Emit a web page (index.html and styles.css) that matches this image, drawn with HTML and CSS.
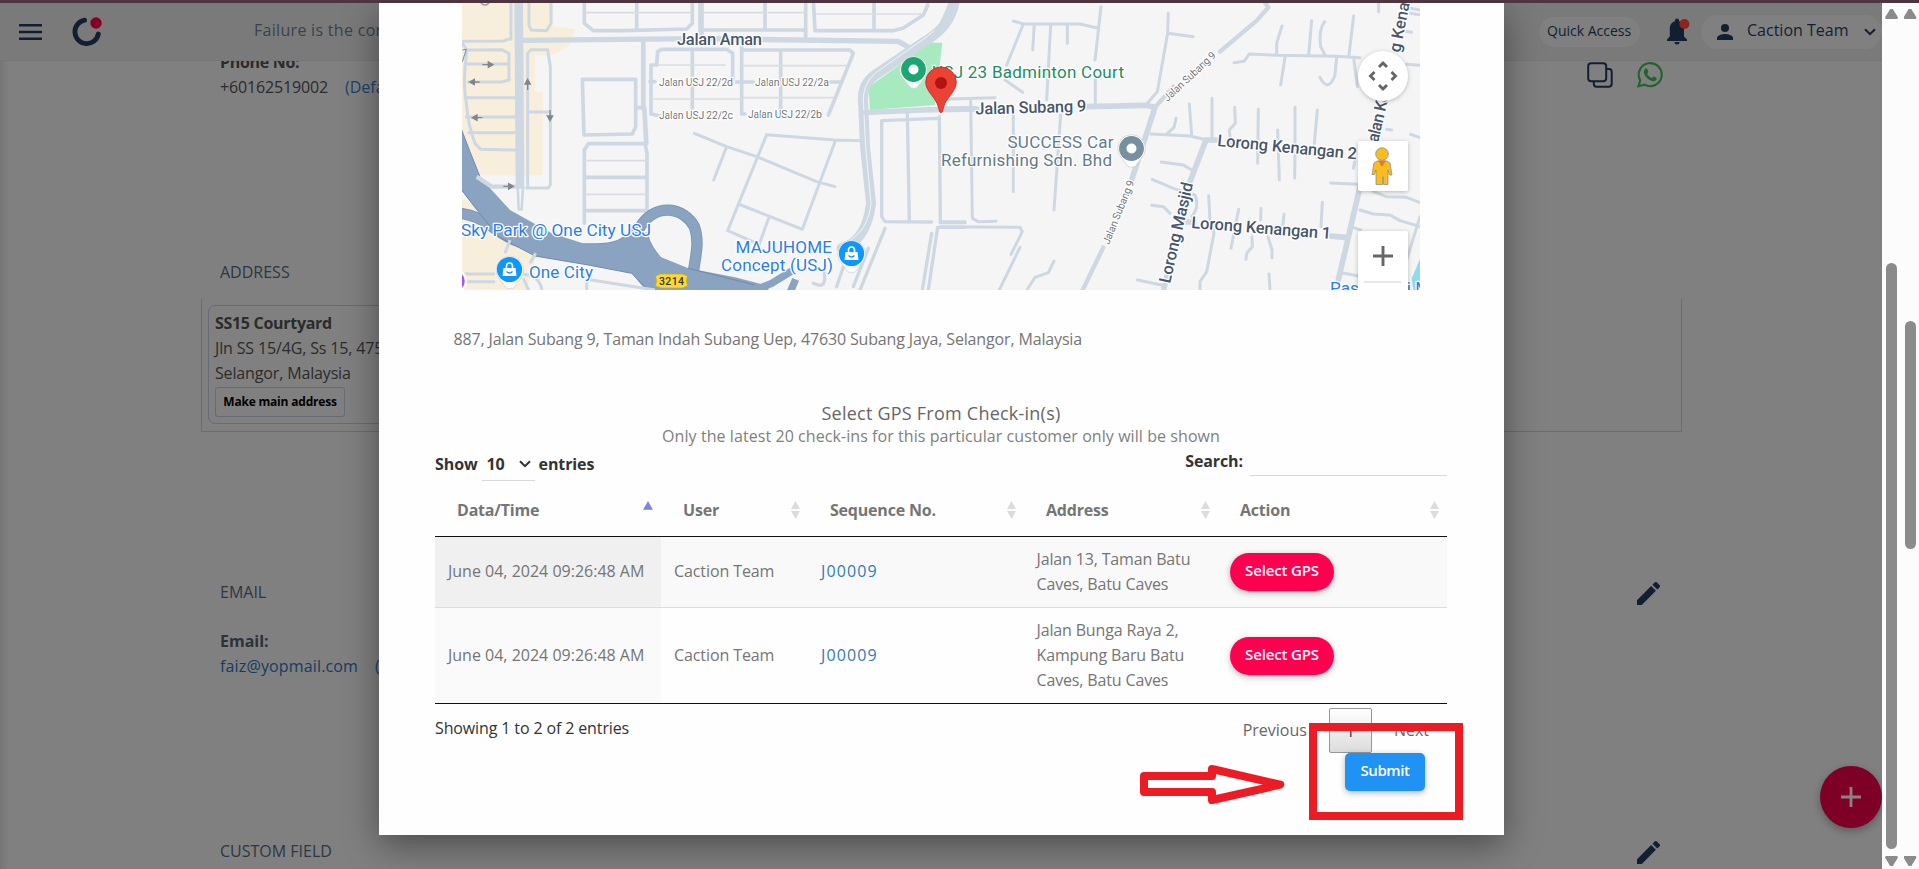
FILE: index.html
```html
<!DOCTYPE html>
<html lang="en">
<head>
<meta charset="utf-8">
<title>Customer address</title>
<link rel="stylesheet" href="styles.css">
</head>
<body>
<div class="strip"></div>
<div class="shell">
  <div class="app">
    <header class="top">
      <svg class="menu" width="23" height="16" viewBox="0 0 23 16"><path d="M0 1.3h23M0 8h23M0 14.7h23" stroke="#121f30" stroke-width="2.4"/></svg>
      <svg class="logo" width="30" height="30" viewBox="0 0 30 30"><path d="M12.6 3.2A11.8 11.8 0 1 0 26.3 17" fill="none" stroke="#121f30" stroke-width="4.8" stroke-linecap="round"/><circle cx="24" cy="6" r="5.7" fill="#870026"/></svg>
      <span class="quote">Failure is the condiment that gives success</span>
      <span class="spacer"></span>
      <span class="pill quick">Quick Access</span>
      <svg class="bell" width="24" height="28" viewBox="0 0 24 28"><path d="M1 23v-1.600l2.800-2.800v-8C3.800 6 6.300 3.800 9 3.200V2.600a2 2 0 0 1 4 0v.6c3 .7 5 3.300 5 7.400v8l3 2.800V23zM8.500 24h5a2.500 2.500 0 0 1-5 0z" fill="#121f30"/><circle cx="18.400" cy="6" r="5" fill="#8e2420"/></svg>
      <span class="pill user">
        <svg width="16" height="16" viewBox="0 0 16 16"><circle cx="8" cy="4" r="4" fill="#121f30"/><path d="M0 16v-2c0-2.700 5.300-4 8-4s8 1.300 8 4v2z" fill="#121f30"/></svg>
        <span class="name">Caction Team</span>
        <svg width="12" height="8" viewBox="0 0 12 8"><path d="M1 1.200l5 5 5-5" fill="none" stroke="#121f30" stroke-width="2"/></svg>
      </span>
    </header>
    <main class="page">
      <section class="row phone">
        <div><b class="dark">Phone No:</b><div><span class="num">+60162519002</span><span class="def">(Default)</span></div></div>
        <div class="tools">
          <svg width="26" height="26" viewBox="0 0 26 26" fill="none" stroke="#121f30" stroke-width="2"><rect x="1.200" y="1.200" width="18" height="18" rx="3"/><path d="M20 7h2a2.700 2.700 0 0 1 2.700 2.700v12a3 3 0 0 1-3 3H9.500a2.700 2.700 0 0 1-2.700-2.700v-2.300"/></svg>
          <svg width="26" height="26" viewBox="0 0 26 26"><path d="M1.500 24.300l1.700-6A11.500 11.500 0 1 1 7.600 22.700z" fill="none" stroke="#21622f" stroke-width="2.100"/><path d="M8.300 6.700c.7-.6 1.500-.4 1.900.3l1.100 2.500c.2.800-.9 1.700-1.200 2.200 1 2 2.500 3.400 4.700 4.300.6-.4 1.300-1.800 2.100-1.500l2.500 1.200c.6.500.3 1.700-.2 2.300-1 1.200-2.600 1.500-4.200 1C11.200 17.800 8.300 15 7.100 11.700c-.6-1.900-.1-3.900 1.200-5z" fill="#21622f"/></svg>
        </div>
      </section>
      <h3 class="head address-head">ADDRESS</h3>
      <section class="outer">
        <div class="inner">
          <b class="dark">SS15 Courtyard</b>
          <span class="num">Jln SS 15/4G, Ss 15, 47500 Subang Jaya,</span>
          <span class="num malay">Selangor, Malaysia</span>
          <button class="main-addr">Make main address</button>
        </div>
      </section>
      <section class="row email-row">
        <h3 class="head">EMAIL</h3>
        <svg class="pencil" width="23" height="23" viewBox="3 3 18 18"><path d="M3 17.250V21h3.750L17.810 9.940l-3.750-3.750zM20.710 7.040a1 1 0 0 0 0-1.410l-2.340-2.340a1 1 0 0 0-1.410 0l-1.830 1.830 3.750 3.750z" fill="#121f30"/></svg>
      </section>
      <section class="email"><b class="slate">Email:</b><div><span class="mail">faiz@yopmail.com</span><span class="def">(Default)</span></div></section>
      <section class="row custom">
        <h3 class="head">CUSTOM FIELD</h3>
        <svg class="pencil" width="23" height="23" viewBox="3 3 18 18"><path d="M3 17.250V21h3.750L17.810 9.940l-3.750-3.750zM20.710 7.040a1 1 0 0 0 0-1.410l-2.340-2.340a1 1 0 0 0-1.410 0l-1.830 1.830 3.750 3.750z" fill="#121f30"/></svg>
      </section>
    </main>
    <div class="fab"><svg width="20" height="20" viewBox="0 0 20 20"><path d="M10 0v20M0 10h20" stroke="#8a8285" stroke-width="2.800"/></svg></div>

    <div class="modal">
      <svg class="map" width="958" height="287" viewBox="462 3 958 287">
        <rect x="462" y="3" width="958" height="287" fill="#f5f5f5"/>
        <g transform="translate(455 0) scale(.333333)">
          <path d="M0 0H295V78L360 88 350 125C335 150 300 160 285 168L240 166V275H263V526H80L0 390zM0 600L60 600 245 760 215 870H0z" fill="#f7efdc"/>
          <path d="M1462 128L1440 315 1245 330 1240 262 1375 165 1420 128z" fill="#a8eac0"/>
          <g fill="none" stroke="#cdd8e2" stroke-linejoin="round" stroke-linecap="round">
            <path stroke-width="26" stroke-linecap="butt" d="M191 0L195 565"/>
            <path stroke-width="8" d="M188 560L191 628 200 628 204 560"/>
            <path stroke-width="16" d="M205 121L500 118 740 116 1330 124 1362 142"/>
            <path stroke-width="9" d="M168 0V118M0 124L145 123 165 116M22 130L36 150 140 149 162 160V240L140 246H40M36 192H162M36 150Q22 240 34 310 40 380 60 430L78 448 180 450M30 293H180M34 351H180M42 398H180M222 0V75L228 90 275 92 288 70V0M218 560V160L228 149H278L286 200V555L280 564H215M225 336H286"/>
            <path stroke-width="11" d="M388 0V70L415 92 510 92 695 87 712 70V0M545 0V90M750 90L1050 90M930 0V90M1052 0V110M1075 0L1080 92 1315 92 1345 84 1405 45 1418 15M1257 0V90"/>
            <path stroke-width="17" d="M738 0V100"/>
            <path stroke-width="14" d="M565 125V325M568 325L574 430"/>
            <path stroke-width="11" d="M382 238H542V380L532 402 387 405zM545 323H565M388 670V450L400 431H570L576 460V632H390M390 532H575M588 342V195H605L608 155 620 148H815L833 160V240M588 342L615 348M585 245H600M712 155V325M860 140V342H870M865 150H1185L1195 160 1120 345M977 155V325M845 246H895M1120 246H1155"/>
            <path stroke-width="5" stroke="#d9dde2" d="M608 195H810M865 197H1175M588 297H860M865 293H1135M390 482H575M390 583H575M395 38H710M745 38H930M940 38H1050M1085 42H1255M1260 42H1400"/>
            <path stroke-width="9" d="M718 400L815 440 905 470 1085 545 1140 560M815 440L776 540M935 404L818 692M935 404L1140 420 1230 422M1140 425L1042 688 850 612M818 692L900 728M942 652L912 735"/>
            <path stroke-width="30" d="M1500 0C1490 60 1460 95 1400 130L1260 225Q1216 255 1225 320L1230 440 1248 610C1240 680 1210 730 1160 745"/>
            <path stroke-width="3" stroke="#f1f4f6" d="M1495 10C1480 60 1440 95 1380 135L1260 220Q1218 255 1226 320L1232 440 1248 610C1240 680 1210 710 1160 735"/>
            <path stroke-width="16" d="M1228 338L1400 330 1560 327"/>
            <path stroke-width="10" d="M1430 666L1290 665 1280 650V362L1448 355M1357 340L1363 660M1453 350L1456 666H1530M1290 685L1215 870M1430 700L1402 870M1530 682H1448L1420 870M1145 860L1165 800M1195 860L1240 745M1075 850Q1115 870 1108 820"/>
          </g>
          <g fill="none" stroke="#8aa3c0" stroke-linejoin="round">
            <path stroke="#7795b8" stroke-width="34" d="M0 638C130 650 110 730 290 745C420 745 500 765 550 690 600 600 690 625 718 680C740 740 710 800 708 880M562 700C570 760 620 790 640 830"/>
            <path stroke-width="29" d="M0 638C130 650 110 730 290 745C420 745 500 765 550 690 600 600 690 625 718 680C740 740 710 800 708 880M562 700C570 760 620 790 640 830"/>
            <path stroke-width="22" d="M895 872L950 850 1012 812M1022 838L1004 880"/>
            <path stroke="none" fill="#8aa3c0" d="M0 340L20 390 45 455 75 530 110 570 165 630 290 700 400 735 495 735 550 700 590 760 700 805 840 832 940 858V880H580L530 820 400 795 240 768 130 710 70 635 15 565z"/>
            <path stroke="#6b8cae" stroke-width="3" d="M18 385L45 455 75 530M20 570L70 635 130 710 240 768 400 795 530 820 580 870M700 805L900 855M22 150L34 148 22 185"/>
          </g>
          <path d="M65 530L110 560H200" fill="none" stroke="#cdd8e2" stroke-width="13"/>
          <path d="M0 822H120M0 845H120M205 822C250 830 260 850 262 880M395 880V838L600 870M205 835L225 880M150 760L165 720M225 790L242 760" fill="none" stroke="#cdd8e2" stroke-width="9"/>
          <g fill="#80868b" stroke="#80868b" stroke-width="4"><path d="M82 194h18v-8l14 8-14 8v-8M74 246H58v-8l-14 8 14 8v-8M82 353H66v-8l-14 8 14 8v-8M145 559h16v-8l14 8-14 8v-8M218 270v-18h-8l8-14 8 14h-8M285 330v18h-8l8 14 8-14h-8"/></g>
          <circle cx="90" cy="2" r="13" fill="none" stroke="#9aa0a6" stroke-width="5"/>
        </g>
        <g transform="translate(940 0) scale(.333333)" fill="none" stroke="#cdd8e2" stroke-linejoin="round" stroke-linecap="round">
          <path stroke-width="26" d="M-5 95Q15 75 40 5"/>
          <path stroke-width="17" d="M0 327H110M440 320L615 316 645 322 575 540M800 420H830M798 420L750 545M672 865L680 830M1260 560L1230 690 1195 840M1170 708L1215 712M735 666H760"/>
          <path stroke-width="13" d="M645 322L700 260M840 155L950 62 985 22 975 8M490 742L428 870"/>
          <path stroke-width="9" d="M220 63L250 72 420 72 475 85M250 72L200 195M195 240L248 277M332 75L320 300M283 72L278 150M382 72V130M483 20L465 180M466 230V310M685 40L683 100 652 275 620 312M683 100L760 110M0 298L165 293M92 300L97 655 115 665 168 664M220 345V575M362 345L342 630M0 680L240 682 247 695 213 763M0 668H75M240 742L178 870M342 783L325 818 285 832 262 868M633 402L750 408 800 420M748 312L755 405M816 295V415M884 322L886 370 868 390 872 432M955 328L953 490M1013 390L1018 540M1065 322V460L1064 535M1132 330L1123 430M708 355L702 382 682 400M664 486L730 495 755 510M637 538L700 565 765 585Q780 620 755 650M635 616L670 620 690 640M592 840L665 855M806 587L810 660 822 700 800 815 780 845V870M987 822L990 870M896 628L873 745M936 710L937 740 920 760 918 778M963 625L962 660M984 710L996 750V773M1032 643L1028 680M1147 607L1143 680M882 188L912 184 928 162 1010 166 1190 169 1260 173M1026 78L1010 130V162M1115 62L1106 165M1154 65Q1135 90 1142 140L1155 165M1241 48L1227 165M1035 172L1022 255M1190 172L1185 225Q1165 280 1140 232M1241 172L1252 260M1172 549L1255 553M1300 575L1340 590 1400 592 1440 608M1260 630L1300 642 1350 645 1380 662 1440 680M1240 683L1262 690M1205 818L1255 828M1316 5V35M1395 22L1440 30M1400 38L1440 44M1390 93L1415 97M1400 193L1440 196M1340 388L1355 390M1412 403L1440 413M1440 650L1400 780M1240 505L1245 480"/>
          <path d="M1445 765L1415 835 1420 870H1445z" fill="#90dced" stroke="none"/>
        </g>
        <g class="lab" font-size="17">
          <g class="road" font-size="16.500">
            <text x="677" y="44.500" textLength="85">Jalan Aman</text>
            <text x="975.500" y="114.500" textLength="111" transform="rotate(-1.500 975 114)">Jalan Subang 9</text>
            <text x="1217" y="146" textLength="140" transform="rotate(5.500 1217 147)">Lorong Kenangan 2</text>
            <text x="1191" y="228" textLength="140" transform="rotate(4.500 1191 229)">Lorong Kenangan 1</text>
            <text transform="translate(1170 284) rotate(-77)" textLength="103">Lorong Masjid</text>
            <text transform="translate(1400 53) rotate(-79)" textLength="60">g Kenan</text>
            <text transform="translate(1378 143) rotate(-77)" textLength="75">alan Kenan</text>
          </g>
          <g class="small" font-size="10.500">
            <text x="659" y="85.500" textLength="74">Jalan USJ 22/2d</text><text x="755" y="85.500" textLength="74">Jalan USJ 22/2a</text>
            <text x="659" y="118.500" textLength="74">Jalan USJ 22/2c</text><text x="748" y="117.500" textLength="74">Jalan USJ 22/2b</text>
            <text transform="translate(1167.500 102) rotate(-43)" textLength="67">Jalan Subang 9</text>
            <text transform="translate(1109 245) rotate(-68)" textLength="68">Jalan Subang 9</text>
          </g>
          <g class="blue"><text x="461" y="236" textLength="190" lengthAdjust="spacingAndGlyphs">Sky Park @ One City USJ</text><text x="529" y="278" textLength="64">One City</text><text x="735.500" y="253" textLength="96.500">MAJUHOME</text><text x="721" y="270.500" textLength="112">Concept (USJ)</text><text x="1330" y="294" textLength="100">Pasar Mini M</text></g>
          <g class="green"><text x="932" y="77.500" textLength="192">USJ 23 Badminton Court</text></g>
          <g class="grey"><text x="1007.500" y="148" textLength="106">SUCCESS Car</text><text x="941" y="165.500" textLength="171">Refurnishing Sdn. Bhd</text></g>
        </g>
        <path d="M655.500 276l5-2h22l5 2-1 5 1 5-5 2h-22l-5-2 1-5z" fill="#fcd835" stroke="#c9a91c" stroke-width=".7"/><text class="shield" x="659" y="285" textLength="25">3214</text>
        <g>
          <g stroke="#fff" stroke-width="2.400">
            <path d="M904 79.500a13.500 13.500 0 1 1 19 0l-6 8q-3 1.500-6 0z" fill="#fff" stroke="#d5d8da" stroke-width=".6"/>
            <circle cx="913.500" cy="69.500" r="12.400" fill="#1ba672" stroke="none"/><circle cx="913.500" cy="69.500" r="5" fill="#fff" stroke="none"/>
            <path d="M1122 158.500a13.800 13.800 0 1 1 19 0l-6 8q-3 1.500-7 0z" fill="#fff" stroke="#c3c8cc" stroke-width=".6"/>
            <circle cx="1131.500" cy="148.500" r="12.400" fill="#7690a0" stroke="none"/><circle cx="1131.500" cy="148.500" r="5" fill="#fff" stroke="none"/>
            <path d="M500.500 280a13.800 13.800 0 1 1 19 0l-6 8q-3 1.500-7 0zM842 264a13.800 13.800 0 1 1 19 0l-6 8q-3 1.500-7 0z" fill="#fff" stroke="#c3c8cc" stroke-width=".6"/>
            <circle cx="509.500" cy="269.500" r="12.600" fill="#0e97ff" stroke="none"/><circle cx="851.500" cy="253.500" r="12.600" fill="#0e97ff" stroke="none"/>
            <circle cx="455" cy="281" r="11" fill="#a855f7"/>
          </g>
          <g fill="#fff"><path d="M503.500 268h12l1 8h-14zM845.500 252h12l1 8h-14z"/><path d="M506.500 269v-3a3 3 0 0 1 6 0v3M848.500 253v-3a3 3 0 0 1 6 0v3" fill="none" stroke="#fff" stroke-width="1.600"/></g>
          <path d="M506.500 271.500q3 3 6 0M848.500 255.500q3 3 6 0" fill="none" stroke="#0e97ff" stroke-width="1.300"/>
        </g>
        <path d="M941 112.500c-1.500 0-1.700-1.500-2.200-4-1.500-7-6-11.500-9.500-16.500-2.300-3.400-3.600-6.500-3.600-9.800a15.300 15.300 0 0 1 30.600 0c0 3.300-1.300 6.400-3.600 9.800-3.500 5-8 9.500-9.500 16.500-.5 2.500-.7 4-2.200 4z" fill="#ea4335" stroke="#c5221f" stroke-width=".8"/><circle cx="941" cy="83" r="6" fill="#b31412"/>
        <g class="controls" fill="#fff">
          <circle cx="1383" cy="76" r="25"/><rect x="1358" y="141" width="50" height="50" rx="2"/><rect x="1358" y="231" width="50" height="70" rx="2"/>
        </g>
        <path d="M1379 67l4-4 4 4M1379 85l4 4 4-4M1374.500 72l-4 4 4 4M1391.500 72l4 4-4 4" fill="none" stroke="#666" stroke-width="2.900"/>
        <path d="M1383 246v20M1373 256h20" stroke="#666" stroke-width="2.900"/><path d="M1364 282h37" stroke="#e0e0e0" stroke-width="1.600"/>
        <path d="M1377 161h10l3 2 2 12h-2.500l-1.500-5v14.500h-4.500V177h-1v7.500H1376V170l-1.500 4.500H1372l2-11.500z" fill="#fbbc20" stroke="#80868b" stroke-width=".7"/><path d="M1378 160.500h8l-4 6.500z" fill="#e67c22"/><circle cx="1382" cy="154" r="6.300" fill="#fbbc20" stroke="#80868b" stroke-width=".7"/>
      </svg>
      <p class="place">887, Jalan Subang 9, Taman Indah Subang Uep, 47630 Subang Jaya, Selangor, Malaysia</p>
      <h2 class="title">Select GPS From Check-in(s)</h2>
      <p class="sub">Only the latest 20 check-ins for this particular customer only will be shown</p>
      <div class="filters">
        <label class="show">Show <span class="sel">10 <svg width="12" height="8" viewBox="0 0 12 8"><path d="M1 1.200l5 5 5-5" fill="none" stroke="#333" stroke-width="2"/></svg></span> entries</label>
        <label class="search">Search: <span class="field"></span></label>
      </div>
      <div class="table">
        <div class="tr th">
          <div>Data/Time<i class="asc"></i></div><div>User<i class="both"></i></div><div>Sequence No.<i class="both"></i></div><div>Address<i class="both"></i></div><div>Action<i class="both"></i></div>
        </div>
        <div class="tr r1">
          <div class="date">June 04, 2024 09:26:48 AM</div><div class="team">Caction Team</div><div class="seq">J00009</div><div class="addr">Jalan 13, Taman Batu<br>Caves, Batu Caves</div><div class="act"><button class="gps">Select GPS</button></div>
        </div>
        <div class="tr r2">
          <div class="date">June 04, 2024 09:26:48 AM</div><div class="team">Caction Team</div><div class="seq">J00009</div><div class="addr">Jalan Bunga Raya 2,<br>Kampung Baru Batu<br>Caves, Batu Caves</div><div class="act"><button class="gps">Select GPS</button></div>
        </div>
      </div>
      <div class="foot">
        <span class="info">Showing 1 to 2 of 2 entries</span>
        <div class="pager"><span>Previous</span><span class="cur">1</span><span>Next</span></div>
      </div>
      <button class="submit">Submit</button>
    </div>
    <svg class="marks" width="325" height="100" viewBox="1139 722 325 100">
      <rect x="1313" y="727" width="146" height="89" fill="none" stroke="#ed1c24" stroke-width="8"/>
      <path transform="translate(1100 540) scale(.333333)" d="M132 708H336V687L541 734 336 780V756H132z" fill="none" stroke="#ed1c24" stroke-width="24" stroke-linejoin="round"/>
    </svg>
  </div>
  <div class="bar inner-bar"><i class="up"></i><b class="thumb"></b><i class="down"></i></div>
  <div class="bar outer-bar"><i class="up"></i><b class="thumb"></b><i class="down"></i></div>
</div>
</body>
</html>
```
FILE: styles.css
```css
*{box-sizing:border-box}
body{margin:0;width:1919px;height:869px;overflow:hidden;font:16px/25px "Open Sans","Noto Sans",sans-serif;background:#808080}
h2,h3,p{margin:0;font-weight:400}
svg{display:block;flex:none}
button{border:0;font-family:inherit;display:block}
.strip{height:3px;background:#4d3440}
.shell{display:flex;height:866px}
.app{position:relative;width:1882px;height:866px;overflow:hidden;background:linear-gradient(90deg,#757575,#808080 9px)}
.top{height:58px;display:flex;align-items:center;background:#7a7a7a;border-bottom:1px solid #767676;padding-left:19px;color:#121f30}
.logo{margin-left:30px}
.quote{margin-left:152px;margin-top:-2px;color:#39424e;letter-spacing:.3px;white-space:nowrap}
.spacer{flex:1}
.pill{background:#808080;border-radius:17px;display:flex;align-items:center}
.quick{width:101px;height:30px;padding:0 0 2px 8px;font-size:14px}
.bell{margin-left:26px}
.user{width:181px;height:34px;margin-left:11px;padding-left:16px}
.name{width:117px;margin:-2px 0 0 14px}
.page{padding-left:220px}
.row{display:flex;justify-content:space-between;width:1443px}
.phone{margin-top:-11px;height:50px;clip-path:inset(11px 0 0)}
.dark{color:#2b2b2b;letter-spacing:-.3px}
.num{color:#2b2b2b;letter-spacing:-.15px;white-space:nowrap}
.def{color:#18436b;margin-left:17px}
.tools{display:flex;gap:24px;padding-top:12px}
.head{font-size:16px;color:#2d3742}
.address-head{margin-top:160px}
.outer{margin:14px 0 0 -19px;width:1481px;height:133px;border:1px solid #6c6c6c;border-top:0;padding:6px}
.inner{width:480px;height:119px;border:1px solid #666b75;border-radius:7px;padding:5px 6px;display:flex;flex-direction:column;align-items:flex-start}
.main-addr{width:130px;height:30px;margin-top:1px;padding:0 0 2px;border:1px solid #666b75;border-radius:3px;background:none;font-size:12px;font-weight:700;letter-spacing:-.2px;color:#000}
.email-row{margin-top:148px;height:25px}
.pencil{margin:2px 3px 0 0}
.email{margin-top:24px}
.slate{color:#2a333d}
.mail{color:#163c5f;letter-spacing:.15px}
.custom{margin-top:160px}
.fab{position:absolute;left:1820px;top:763px;width:62px;height:62px;border-radius:50%;background:#7f0026;box-shadow:0 3px 8px rgba(0,0,0,.3);display:flex;align-items:center;justify-content:center}
.modal{position:absolute;left:379px;top:0;width:1125px;height:832px;background:#fefefe;box-shadow:0 10px 34px rgba(0,0,0,.42);color:#757575;padding:0 57px 0 56px}
.map{margin-left:27px}
.place{margin:37px 0 0 18.500px;letter-spacing:-.15px}
.title{margin-top:49px;font-size:18px;letter-spacing:.23px;text-align:center;color:#666}
.sub{margin-top:-2px;text-align:center;letter-spacing:.07px;color:#808080}
.filters{display:flex;justify-content:space-between;height:35px;font-weight:700;color:#333}
.show,.search{display:flex;align-items:flex-start;margin-top:3px}
.show{letter-spacing:-.1px}
.sel{display:flex;align-items:center;justify-content:space-between;width:53px;height:29px;margin:0 4px;padding:0 4px 4px 5px;border-bottom:1px solid #d8d8d8}
.search{margin-top:0;letter-spacing:-.1px}
.field{width:197px;height:27px;margin-left:7px;border-bottom:1px solid #d8d8d8}
.table{border-bottom:1px solid #111}
.tr{display:grid;grid-template-columns:226px 147px 216px 194px 229px}
.tr>div{display:flex;align-items:center;padding-left:13px}
.th{height:53px;border-bottom:1px solid #111;font-weight:700;letter-spacing:-.2px}
.th>div{padding:0 8px 0 22px;justify-content:space-between}
.both,.asc{width:9px;height:18px;background:#dcdcdc}
.both{clip-path:polygon(50% 0,100% 45%,0 45%,0 55%,100% 55%,50% 100%,0 55%,0 45%)}
.asc{background:#7b85e0;width:10px;clip-path:polygon(50% 0,100% 48%,0 48%)}
.r1{height:71px;background:#f9f9f9;border-bottom:1px solid #ddd}
.r1 .date{background:#f0f0f0}
.r2{height:95px}
.r2 .date{background:#fafafa}
.r1>div{padding-bottom:2px}
.tr .act{padding:0 0 0 12px}
.team{letter-spacing:-.1px}
.tr .seq{color:#337ab7;letter-spacing:1.100px}
.tr .addr{letter-spacing:-.15px;padding:0 0 0 12.500px}
.gps{width:104px;height:38px;padding:0 0 4px;border-radius:19px;background:#ff0050;color:#fff;font-size:15px;font-weight:600;letter-spacing:-.15px;box-shadow:0 2px 6px rgba(0,0,0,.28)}
.foot{display:flex;justify-content:space-between;height:49px}
.info{margin-top:12px;color:#333;letter-spacing:-.13px}
.pager{display:flex;gap:22px;padding:4px 18px 0 0;line-height:44px;color:#666}
.cur{width:43px;height:45px;border:1px solid #979797;border-radius:2px;background:linear-gradient(#fff,#dcdcdc);text-align:center;color:#333}
.submit{width:80px;height:38px;margin-left:910px;padding:0 0 4px;border-radius:5px;position:relative;background:#1f92f4;color:#fff;font-size:15px;font-weight:600;letter-spacing:-.4px;box-shadow:0 2px 6px rgba(0,0,0,.28)}
.marks{position:absolute;left:1139px;top:719px}
.lab{font-family:Roboto,sans-serif;paint-order:stroke;stroke:#fff;stroke-width:2.500px;stroke-linejoin:round}
.road{fill:#46566b;font-weight:500}
.small{fill:#70757a}
.blue{fill:#2a7de9}
.green{fill:#1b8e5f}
.grey{fill:#64798a}
.shield{font:500 10.500px Roboto,sans-serif;fill:#333}
.controls{filter:drop-shadow(0 1px 2px rgba(0,0,0,.25))}
.bar{display:flex;flex-direction:column;align-items:center;background:#fcfcfc;padding:6px 0 3px}
.inner-bar{width:19px}
.outer-bar{width:18px}
.up,.down{width:13px;height:10px;background:#8b8b8b;clip-path:polygon(40% 0,60% 0,100% 85%,94% 100%,6% 100%,0 85%)}
.down{transform:scaleY(-1);margin-top:auto}
.thumb{width:11px;border-radius:6px;background:#8b8b8b}
.inner-bar .thumb{margin-top:244px;height:586px}
.outer-bar .thumb{margin-top:302px;height:228px}
```
